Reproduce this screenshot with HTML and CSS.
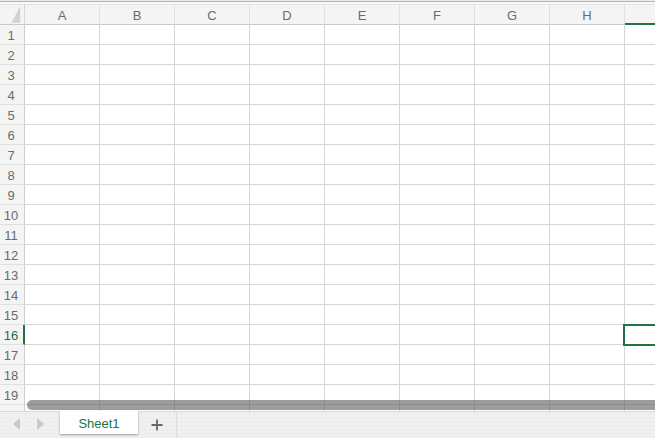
FILE: index.html
```html
<!DOCTYPE html>
<html>
<head>
<meta charset="utf-8">
<link rel="stylesheet" href="styles.css">
</head>
<body>
<div class="app">
  <div class="topbar"><div class="tl1"></div><div class="tl2"></div><div class="tl3"></div><div class="tl4"></div></div>
  <div class="gridwrap">
    <div class="grid">
      <div class="corner"><svg width="25" height="20" viewBox="0 0 25 20"><polygon points="21,1 21,18 12,18" fill="#d2d2d2"/></svg></div>
      <div class="ch">A</div><div class="ch">B</div><div class="ch">C</div><div class="ch">D</div><div class="ch">E</div><div class="ch">F</div><div class="ch">G</div><div class="ch">H</div><div class="ch ch-sel"></div>

      <div class="rh">1</div><div class="c"></div><div class="c"></div><div class="c"></div><div class="c"></div><div class="c"></div><div class="c"></div><div class="c"></div><div class="c"></div><div class="c"></div>
      <div class="rh">2</div><div class="c"></div><div class="c"></div><div class="c"></div><div class="c"></div><div class="c"></div><div class="c"></div><div class="c"></div><div class="c"></div><div class="c"></div>
      <div class="rh">3</div><div class="c"></div><div class="c"></div><div class="c"></div><div class="c"></div><div class="c"></div><div class="c"></div><div class="c"></div><div class="c"></div><div class="c"></div>
      <div class="rh">4</div><div class="c"></div><div class="c"></div><div class="c"></div><div class="c"></div><div class="c"></div><div class="c"></div><div class="c"></div><div class="c"></div><div class="c"></div>
      <div class="rh">5</div><div class="c"></div><div class="c"></div><div class="c"></div><div class="c"></div><div class="c"></div><div class="c"></div><div class="c"></div><div class="c"></div><div class="c"></div>
      <div class="rh">6</div><div class="c"></div><div class="c"></div><div class="c"></div><div class="c"></div><div class="c"></div><div class="c"></div><div class="c"></div><div class="c"></div><div class="c"></div>
      <div class="rh">7</div><div class="c"></div><div class="c"></div><div class="c"></div><div class="c"></div><div class="c"></div><div class="c"></div><div class="c"></div><div class="c"></div><div class="c"></div>
      <div class="rh">8</div><div class="c"></div><div class="c"></div><div class="c"></div><div class="c"></div><div class="c"></div><div class="c"></div><div class="c"></div><div class="c"></div><div class="c"></div>
      <div class="rh">9</div><div class="c"></div><div class="c"></div><div class="c"></div><div class="c"></div><div class="c"></div><div class="c"></div><div class="c"></div><div class="c"></div><div class="c"></div>
      <div class="rh">10</div><div class="c"></div><div class="c"></div><div class="c"></div><div class="c"></div><div class="c"></div><div class="c"></div><div class="c"></div><div class="c"></div><div class="c"></div>
      <div class="rh">11</div><div class="c"></div><div class="c"></div><div class="c"></div><div class="c"></div><div class="c"></div><div class="c"></div><div class="c"></div><div class="c"></div><div class="c"></div>
      <div class="rh">12</div><div class="c"></div><div class="c"></div><div class="c"></div><div class="c"></div><div class="c"></div><div class="c"></div><div class="c"></div><div class="c"></div><div class="c"></div>
      <div class="rh">13</div><div class="c"></div><div class="c"></div><div class="c"></div><div class="c"></div><div class="c"></div><div class="c"></div><div class="c"></div><div class="c"></div><div class="c"></div>
      <div class="rh">14</div><div class="c"></div><div class="c"></div><div class="c"></div><div class="c"></div><div class="c"></div><div class="c"></div><div class="c"></div><div class="c"></div><div class="c"></div>
      <div class="rh">15</div><div class="c"></div><div class="c"></div><div class="c"></div><div class="c"></div><div class="c"></div><div class="c"></div><div class="c"></div><div class="c"></div><div class="c"></div>
      <div class="rh rh-sel">16</div><div class="c"></div><div class="c"></div><div class="c"></div><div class="c"></div><div class="c"></div><div class="c"></div><div class="c"></div><div class="c"></div><div class="c c-sel"></div>
      <div class="rh">17</div><div class="c"></div><div class="c"></div><div class="c"></div><div class="c"></div><div class="c"></div><div class="c"></div><div class="c"></div><div class="c"></div><div class="c"></div>
      <div class="rh">18</div><div class="c"></div><div class="c"></div><div class="c"></div><div class="c"></div><div class="c"></div><div class="c"></div><div class="c"></div><div class="c"></div><div class="c"></div>
      <div class="rh">19</div><div class="c"></div><div class="c"></div><div class="c"></div><div class="c"></div><div class="c"></div><div class="c"></div><div class="c"></div><div class="c"></div><div class="c"></div>
      <div class="rh">20</div><div class="c"></div><div class="c"></div><div class="c"></div><div class="c"></div><div class="c"></div><div class="c"></div><div class="c"></div><div class="c"></div><div class="c"></div>
    </div>
    <div class="hscroll"></div>
  </div>
  <div class="tabbar">
    <div class="navs">
      <svg width="10" height="12" viewBox="0 0 10 12"><polygon points="8,0 8,12 1,6" fill="#c9c9c9"/></svg>
      <svg width="10" height="12" viewBox="0 0 10 12"><polygon points="2,0 2,12 9,6" fill="#c9c9c9"/></svg>
    </div>
    <div class="tab">Sheet1</div>
    <div class="addtab"><svg width="12" height="12" viewBox="0 0 12 12"><path d="M6 0.5V11.5M0.5 6H11.5" stroke="#666" stroke-width="1.8"/></svg></div>
  </div>
</div>
</body>
</html>
```

FILE: styles.css
```css
html, body {
  margin: 0;
  padding: 0;
  background: #fff;
}
.app {
  width: 655px;
  height: 438px;
  overflow: hidden;
  font-family: "Liberation Sans", Arial, sans-serif;
}
.topbar .tl1 { height: 1px; background: #e9e9e9; }
.topbar .tl2 { height: 1px; background: #b4b4b4; }
.topbar .tl3 { height: 2px; background: #f8f8f8; }
.topbar .tl4 { height: 1px; background: #e2e2e2; }

.gridwrap {
  position: relative;
  height: 406px;
  overflow: hidden;
}
.grid {
  display: grid;
  grid-template-columns: 25px repeat(9, 75px);
  grid-auto-rows: 20px;
  width: 700px;
}
.grid > div {
  box-sizing: border-box;
}
.corner {
  background: #f4f4f4;
  border-right: 1px solid #d6d6d6;
  border-bottom: 1px solid #c9c9c9;
  display: flex;
}
.ch {
  background: #f4f4f4;
  border-right: 1px solid #e1e1e1;
  border-bottom: 1px solid #c9c9c9;
  color: #6b6b6b;
  font-size: 13px;
  display: flex;
  align-items: center;
  justify-content: center;
  padding-top: 1px;
}
.ch-sel {
  border-bottom: 2px solid #217346;
}
.rh {
  background: #f4f4f4;
  border-right: 1px solid #cfcfcf;
  border-bottom: 1px solid #e0e0e0;
  color: #6b6b6b;
  font-size: 13px;
  display: flex;
  align-items: center;
  justify-content: center;
  padding-right: 2px;
  padding-top: 2px;
}
.rh-sel {
  border-right: 2px solid #217346;
  color: #2f6a46;
  padding-right: 1px;
}
.c {
  border-right: 1px solid #d6d6d6;
  border-bottom: 1px solid #d6d6d6;
}
.c-sel {
  position: relative;
}
.c-sel::after {
  content: "";
  position: absolute;
  left: -2px;
  top: -1px;
  right: -2px;
  bottom: -2px;
  border: 2px solid #217346;
}
.hscroll {
  position: absolute;
  left: 27px;
  right: -20px;
  top: 395px;
  height: 10px;
  border-radius: 5px;
  background: rgba(90, 90, 90, 0.6);
}
.tabbar {
  height: 26px;
  border-top: 1px solid #d9d9d9;
  background-color: #f0f0f0;
  background-image: radial-gradient(#e4e4e4 0.6px, transparent 0.8px);
  background-size: 4px 4px;
  display: flex;
  align-items: stretch;
}
.navs {
  width: 60px;
  display: flex;
  align-items: center;
  justify-content: flex-start;
  gap: 13px;
  padding-left: 12px;
  box-sizing: border-box;
  padding-bottom: 2px;
}
.tab {
  width: 78px;
  height: 23px;
  margin-top: -1px;
  background: #fff;
  box-shadow: 0 1px 2px rgba(0, 0, 0, 0.35);
  color: #217346;
  font-size: 13px;
  display: flex;
  align-items: center;
  justify-content: center;
  padding-top: 1px;
  box-sizing: border-box;
}
.addtab {
  width: 38px;
  border-right: 1px solid #dcdcdc;
  display: flex;
  align-items: center;
  justify-content: center;
  padding-bottom: 1px;
}
```
